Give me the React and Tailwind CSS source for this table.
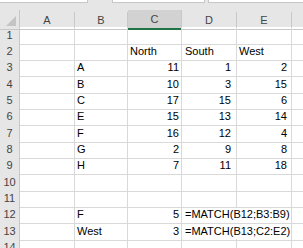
import React from "react";

const cols = ["A", "B", "C", "D", "E"];

// sheet content, keyed by row number
const rows = [
  { n: 1 },
  { n: 2, c: "North", d: "South", e: "West" },
  { n: 3, b: "A", c: 11, d: 1, e: 2 },
  { n: 4, b: "B", c: 10, d: 3, e: 15 },
  { n: 5, b: "C", c: 17, d: 15, e: 6 },
  { n: 6, b: "E", c: 15, d: 13, e: 14 },
  { n: 7, b: "F", c: 16, d: 12, e: 4 },
  { n: 8, b: "G", c: 2, d: 9, e: 8 },
  { n: 9, b: "H", c: 7, d: 11, e: 18 },
  { n: 10 },
  { n: 11 },
  { n: 12, b: "F", c: 5, formula: "=MATCH(B12;B3:B9)" },
  { n: 13, b: "West", c: 3, formula: "=MATCH(B13;C2:E2)" },
  { n: 14 },
];

const heights = ["h-[16px]", "h-[16px]", "h-[17px]"];

function Cell({ children, align = "left", className = "" }) {
  return (
    <div
      className={`flex items-center h-full border-r border-b border-[#d9d9d9] whitespace-nowrap overflow-visible ${
        align === "right" ? "justify-end" : "justify-start"
      } ${className}`}
    >
      {children}
    </div>
  );
}

export default function App() {
  return (
    <div
      className="w-[303px] h-[248px] overflow-hidden bg-white text-[11px] text-black"
      style={{ fontFamily: '"Liberation Sans", Arial, sans-serif' }}
    >
      {/* formula bar edge */}
      <div className="flex h-[3px] bg-[#e6e6e6]">
        <div className="w-[88px] bg-white border-b border-r border-[#c6c6c6]" />
        <div className="w-[24px]" />
        <div className="w-[93px] bg-white border-b border-x border-[#c6c6c6]" />
        <div className="w-[3px]" />
        <div className="flex-1 bg-white border-b border-l border-[#c6c6c6]" />
      </div>
      <div className="h-[7px] bg-[#e6e6e6]" />

      {/* column headers */}
      <div className="grid grid-cols-[20px_55px_53px_54px_55px_55px_1fr] h-[17px] bg-[#e6e6e6] text-[#444]">
        <div className="relative border-r border-[#c8c8c8] border-b">
          <div
            className="absolute right-[3px] bottom-[3px] w-0 h-0 border-l-[10px] border-l-transparent border-b-[10px] border-b-[#c4c4c4]"
          />
        </div>
        {cols.map((c) =>
          c === "C" ? (
            <div
              key={c}
              className="flex items-center justify-center bg-[#d2d2d2] border-r border-[#c8c8c8] border-b-2 border-b-[#217346]"
            >
              {c}
            </div>
          ) : (
            <div
              key={c}
              className="flex items-center justify-center border-r border-b border-[#c8c8c8] mt-[2px]"
            >
              {c}
            </div>
          )
        )}
        <div className="border-b border-[#c8c8c8]" />
      </div>

      {/* sheet rows */}
      {rows.map((r, i) => (
        <div
          key={r.n}
          className={`grid grid-cols-[20px_55px_53px_54px_55px_55px_1fr] ${heights[i % 3]}`}
        >
          <div className="flex items-center justify-center bg-[#e6e6e6] text-[#444] border-r border-b border-[#c8c8c8]">
            {r.n}
          </div>
          <Cell />
          <Cell className="pl-[2px]">{r.b}</Cell>
          <Cell
            align={typeof r.c === "number" ? "right" : "left"}
            className={typeof r.c === "number" ? "pr-[2px]" : "pl-[2px]"}
          >
            {r.c}
          </Cell>
          {r.formula ? (
            <Cell className="col-span-2 pl-[3px]">{r.formula}</Cell>
          ) : (
            <>
              <Cell
                align={typeof r.d === "number" ? "right" : "left"}
                className={typeof r.d === "number" ? "pr-[5px]" : "pl-[3px]"}
              >
                {r.d}
              </Cell>
              <Cell
                align={typeof r.e === "number" ? "right" : "left"}
                className={typeof r.e === "number" ? "pr-[4px]" : "pl-[2px]"}
              >
                {r.e}
              </Cell>
            </>
          )}
          <div className="border-b border-[#d9d9d9]" />
        </div>
      ))}
    </div>
  );
}
